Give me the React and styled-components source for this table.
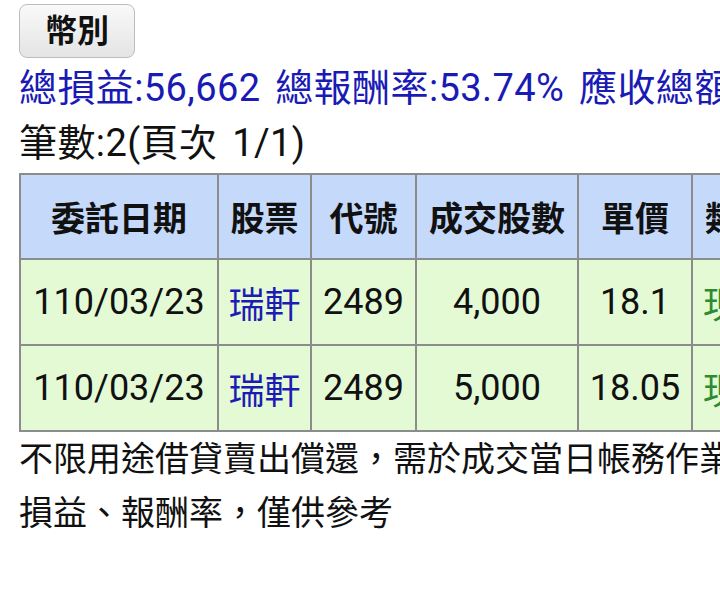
import React from "react";
import styled, { createGlobalStyle } from "styled-components";

const GlobalStyle = createGlobalStyle`
  html, body {
    margin: 0;
    padding: 0;
    background: #ffffff;
  }
  body {
    font-family: Roboto, "Noto Sans CJK TC", "Noto Sans", sans-serif;
    color: #111;
  }
`;

const columns = [
  { label: "委託日期", width: 198 },
  { label: "股票", width: 93 },
  { label: "代號", width: 105 },
  { label: "成交股數", width: 162 },
  { label: "單價", width: 114 },
  { label: "類別", width: 94 },
  { label: "損益", width: 120 },
];

const trades = [
  { date: "110/03/23", stock: "瑞軒", code: "2489", qty: "4,000", price: "18.1", kind: "現股", pl: "28,331" },
  { date: "110/03/23", stock: "瑞軒", code: "2489", qty: "5,000", price: "18.05", kind: "現股", pl: "28,331" },
];

const App = () => {
  return (
    <>
      <GlobalStyle />
      <Page>
        <CurrencyButton>幣別</CurrencyButton>
        <Summary>總損益:56,662 總報酬率:53.74% 應收總額:163,038</Summary>
        <Count>筆數:2(頁次 1/1)</Count>
        <Table>
          <thead>
            <tr>
              {columns.map((c) => (
                <Th key={c.label} width={c.width}>
                  {c.label}
                </Th>
              ))}
            </tr>
          </thead>
          <tbody>
            {trades.map((t, i) => (
              <tr key={i}>
                <Td>{t.date}</Td>
                <Td color="#1c1cb4">{t.stock}</Td>
                <Td>{t.code}</Td>
                <Td>{t.qty}</Td>
                <Td>{t.price}</Td>
                <Td color="#2e8b2e">{t.kind}</Td>
                <Td>{t.pl}</Td>
              </tr>
            ))}
          </tbody>
        </Table>
        <Note>
          不限用途借貸賣出償還，需於成交當日帳務作業完成後，才會計算
          <br />
          損益、報酬率，僅供參考
        </Note>
      </Page>
    </>
  );
};

export default App;

const Page = styled.div`
  width: 720px;
  height: 593px;
  overflow: hidden;
  box-sizing: border-box;
  padding: 4px 0 0 19px;
`;

const CurrencyButton = styled.button`
  display: block;
  width: 116px;
  height: 54px;
  margin: 0;
  padding: 0;
  border: 1.5px solid #bdbdbd;
  border-radius: 8px;
  background: linear-gradient(#f9f9f9, #e4e4e4);
  font-family: Roboto, "Noto Sans CJK TC", sans-serif;
  font-size: 32px;
  font-weight: 700;
  color: #111;
  line-height: 1;
`;

const Summary = styled.div`
  margin-top: 6px;
  white-space: nowrap;
  font-size: 38px;
  line-height: 48px;
  letter-spacing: 0.4px;
  word-spacing: 5px;
  color: #1a1ab4;
`;

const Count = styled.div`
  margin-top: 5px;
  white-space: nowrap;
  font-size: 38px;
  line-height: 52px;
  letter-spacing: 0.4px;
  word-spacing: 5px;
  color: #111;
`;

const Table = styled.table`
  margin-top: 4px;
  table-layout: fixed;
  width: ${columns.reduce((s, c) => s + c.width, 0)}px;
  border-collapse: collapse;
  border: 2px solid #8c8c8c;
  white-space: nowrap;
`;

const Th = styled.th`
  width: ${(p) => p.width}px;
  height: 85px;
  box-sizing: border-box;
  padding: 0;
  border: 2px solid #8c8c8c;
  background: #c5d9fb;
  font-size: 34px;
  font-weight: 700;
  color: #111;
  text-align: center;
  overflow: hidden;
`;

const Td = styled.td`
  height: 86px;
  box-sizing: border-box;
  padding: 0;
  border: 2px solid #8c8c8c;
  background: #e4fad5;
  font-size: 36px;
  color: ${(p) => p.color || "#111"};
  text-align: center;
  overflow: hidden;
`;

const Note = styled.div`
  margin-top: 0;
  white-space: nowrap;
  font-size: 34px;
  line-height: 54px;
  color: #111;
`;
